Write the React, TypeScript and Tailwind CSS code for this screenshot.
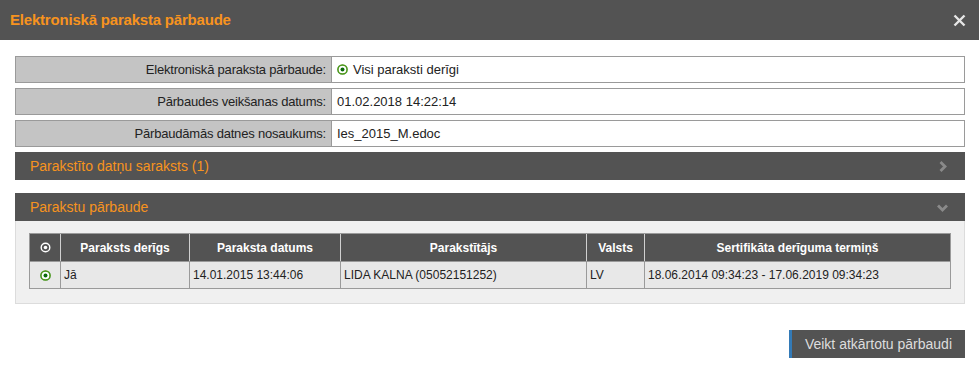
import React from 'react';

function OkIcon({ light = false }: { light?: boolean }) {
  return (
    <svg width="11" height="11" viewBox="0 0 11 11" className="inline-block shrink-0">
      {light ? (
        <>
          <circle cx="5.5" cy="5.5" r="4.3" fill="none" stroke="#ffffff" strokeWidth="1.4" />
          <circle cx="5.5" cy="5.5" r="1.8" fill="#ffffff" />
        </>
      ) : (
        <>
          <circle cx="5.5" cy="5.5" r="4.6" fill="#ffffff" stroke="#1e8a1e" strokeWidth="1.5" />
          <circle cx="5.5" cy="5.5" r="4.6" fill="none" stroke="#c9b400" strokeWidth="0.4" />
          <circle cx="5.5" cy="5.5" r="2" fill="#0b6b0b" />
        </>
      )}
    </svg>
  );
}

function InfoRow({ label, children }: { label: string; children: React.ReactNode }) {
  return (
    <div className="flex h-[27px] border border-[#9a9a9a] text-[13px] text-[#222]">
      <div className="w-[316px] bg-[#c4c4c4] border-r border-[#9a9a9a] flex items-center justify-end pr-[5px] tracking-[-0.2px]">
        {label}
      </div>
      <div className="flex-1 bg-white flex items-center gap-[5px] pl-[5px]">{children}</div>
    </div>
  );
}

function Chevron({ down = false }: { down?: boolean }) {
  return (
    <svg width="13" height="13" viewBox="0 0 13 13">
      {down ? (
        <path d="M2 4.5 L6.5 9 L11 4.5" fill="none" stroke="#8a8a8a" strokeWidth="2.8" />
      ) : (
        <path d="M4.5 2 L9 6.5 L4.5 11" fill="none" stroke="#8a8a8a" strokeWidth="2.8" />
      )}
    </svg>
  );
}

const cols = [
  { w: 'w-[30px]', head: <OkIcon light />, cell: <OkIcon />, center: true },
  { w: 'w-[129px]', head: 'Paraksts derīgs', cell: 'Jā' },
  { w: 'w-[151px]', head: 'Paraksta datums', cell: '14.01.2015 13:44:06' },
  { w: 'w-[246px]', head: 'Parakstītājs', cell: 'LIDA KALNA (05052151252)' },
  { w: 'w-[58px]', head: 'Valsts', cell: 'LV' },
  { w: 'flex-1', head: 'Sertifikāta derīguma termiņš', cell: '18.06.2014 09:34:23 - 17.06.2019 09:34:23' },
];

export default function App() {
  return (
    <div className="w-[979px] h-[367px] bg-white font-['Liberation_Sans',Arial,sans-serif]">
      <div className="h-[40px] bg-[#535353] flex items-center justify-between pl-[10px] pr-[13px]">
        <div className="text-[#f7931e] text-[15px] font-bold tracking-[-0.2px]">Elektroniskā paraksta pārbaude</div>
        <svg width="13" height="13" viewBox="0 0 13 13">
          <path d="M1.5 1.5 L11.5 11.5 M11.5 1.5 L1.5 11.5" stroke="#e6e6e6" strokeWidth="2.4" />
        </svg>
      </div>

      <div className="pl-[15px] pr-[14px] pt-[16px]">
        <div className="flex flex-col gap-[5px]">
          <InfoRow label="Elektroniskā paraksta pārbaude:">
            <OkIcon />
            <span>Visi paraksti derīgi</span>
          </InfoRow>
          <InfoRow label="Pārbaudes veikšanas datums:">01.02.2018 14:22:14</InfoRow>
          <InfoRow label="Pārbaudāmās datnes nosaukums:">Ies_2015_M.edoc</InfoRow>
        </div>

        <div className="mt-[5px] h-[28px] bg-[#535353] flex items-center justify-between pl-[15px] pr-[16px]">
          <span className="text-[#f7931e] text-[14px]">Parakstīto datņu saraksts (1)</span>
          <Chevron />
        </div>

        <div className="mt-[13px] h-[28px] bg-[#535353] flex items-center justify-between pl-[15px] pr-[16px]">
          <span className="text-[#f7931e] text-[14px]">Parakstu pārbaude</span>
          <Chevron down />
        </div>
        <div className="bg-[#f0f0f0] border border-t-0 border-[#dcdcdc] px-[13px] pt-[12px] pb-[14px]">
          <div className="border border-[#9a9a9a]">
            <div className="flex h-[27px] bg-[#535353] text-white text-[12px] font-bold">
              {cols.map((c, i) => (
                <div
                  key={i}
                  className={`${c.w} flex items-center justify-center ${i > 0 ? 'border-l border-[#d0d0d0]' : ''}`}
                >
                  {c.head}
                </div>
              ))}
            </div>
            <div className="flex h-[27px] bg-[#e8e8e8] text-[#222] text-[12px] border-t border-[#9a9a9a]">
              {cols.map((c, i) => (
                <div
                  key={i}
                  className={`${c.w} flex items-center ${c.center ? 'justify-center' : 'pl-[3px]'} ${i > 0 ? 'border-l border-[#9a9a9a]' : ''}`}
                >
                  {c.cell}
                </div>
              ))}
            </div>
          </div>
        </div>

        <div className="flex justify-end mt-[26px]">
          <button className="h-[28px] bg-[#535353] border-l-[3px] border-[#337ab7] text-[#dddddd] text-[14px] pl-[13px] pr-[13px]">
            Veikt atkārtotu pārbaudi
          </button>
        </div>
      </div>
    </div>
  );
}
